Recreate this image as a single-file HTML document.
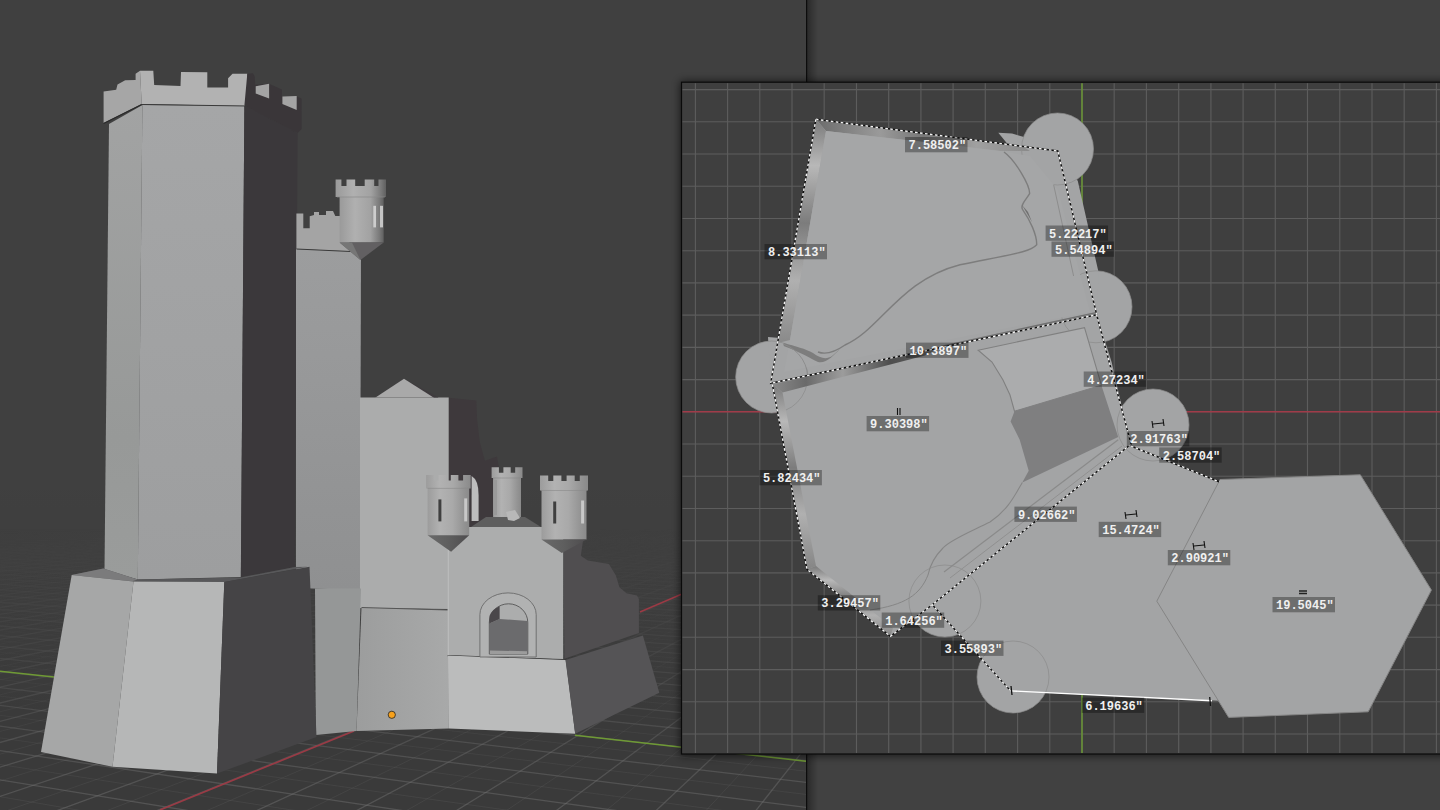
<!DOCTYPE html><html><head><meta charset="utf-8"><style>html,body{margin:0;padding:0;background:#3d3d3d;overflow:hidden}svg{display:block;font-family:"Liberation Mono"}</style></head><body><svg width="1440" height="810" viewBox="0 0 1440 810"><rect x="0" y="0" width="806" height="810" fill="#404040"/>
<defs><linearGradient id="fade" x1="0" y1="0" x2="0" y2="1"><stop offset="0" stop-color="#fff" stop-opacity="0"/><stop offset="0.65" stop-color="#fff" stop-opacity="0"/><stop offset="0.8" stop-color="#fff" stop-opacity="0.3"/><stop offset="0.93" stop-color="#fff" stop-opacity="0.85"/><stop offset="1" stop-color="#fff" stop-opacity="1"/><stop offset="1" stop-color="#fff" stop-opacity="1"/></linearGradient><mask id="fm"><rect x="0" y="0" width="806" height="810" fill="url(#fade)"/></mask><linearGradient id="t2g" x1="0" y1="0" x2="0" y2="1"><stop offset="0" stop-color="#9c9d9e"/><stop offset="1" stop-color="#8f9091"/></linearGradient><linearGradient id="b3g" x1="0" y1="0" x2="1" y2="0"><stop offset="0" stop-color="#9c9d9d"/><stop offset="1" stop-color="#a8a9a9"/></linearGradient><linearGradient id="t1l" x1="0" y1="0" x2="0" y2="1"><stop offset="0" stop-color="#a2a3a3"/><stop offset="0.7" stop-color="#979998"/><stop offset="1" stop-color="#9a9c9b"/></linearGradient><linearGradient id="t1f" x1="0" y1="0" x2="0" y2="1"><stop offset="0" stop-color="#a5a6a7"/><stop offset="1" stop-color="#9d9e9f"/></linearGradient><clipPath id="lv"><rect x="0" y="0" width="806" height="810"/></clipPath></defs>
<linearGradient id="flr" x1="0" y1="0" x2="0" y2="1"><stop offset="0" stop-color="#000" stop-opacity="0"/><stop offset="0.58" stop-color="#000" stop-opacity="0"/><stop offset="0.9" stop-color="#000" stop-opacity="0.1"/></linearGradient>
<rect x="0" y="0" width="806" height="810" fill="url(#flr)"/>
<g clip-path="url(#lv)" mask="url(#fm)">
<line x1="63.9" y1="899.3" x2="-17.4" y2="881.8" stroke="#7a7a7a" stroke-width="1" stroke-opacity="0.16"/>
<line x1="190.9" y1="898.0" x2="-48.7" y2="849.4" stroke="#7a7a7a" stroke-width="1.3" stroke-opacity="0.42"/>
<line x1="317.0" y1="896.7" x2="-42.4" y2="827.9" stroke="#7a7a7a" stroke-width="1" stroke-opacity="0.16"/>
<line x1="442.5" y1="895.4" x2="-36.8" y2="808.6" stroke="#7a7a7a" stroke-width="1.3" stroke-opacity="0.42"/>
<line x1="567.2" y1="894.1" x2="-31.7" y2="791.2" stroke="#7a7a7a" stroke-width="1" stroke-opacity="0.16"/>
<line x1="691.1" y1="892.8" x2="-27.0" y2="775.4" stroke="#7a7a7a" stroke-width="1.3" stroke-opacity="0.42"/>
<line x1="814.4" y1="891.5" x2="-22.8" y2="760.9" stroke="#7a7a7a" stroke-width="1" stroke-opacity="0.16"/>
<line x1="879.2" y1="881.6" x2="-45.5" y2="743.8" stroke="#7a7a7a" stroke-width="1.3" stroke-opacity="0.42"/>
<line x1="885.7" y1="864.2" x2="-41.0" y2="732.0" stroke="#7a7a7a" stroke-width="1" stroke-opacity="0.16"/>
<line x1="891.6" y1="848.2" x2="-36.8" y2="721.1" stroke="#7a7a7a" stroke-width="1.3" stroke-opacity="0.42"/>
<line x1="897.2" y1="833.4" x2="-32.8" y2="711.0" stroke="#7a7a7a" stroke-width="1" stroke-opacity="0.16"/>
<line x1="854.2" y1="813.5" x2="-29.2" y2="701.7" stroke="#7a7a7a" stroke-width="1.3" stroke-opacity="0.42"/>
<line x1="860.6" y1="801.1" x2="-47.5" y2="690.3" stroke="#7a7a7a" stroke-width="1" stroke-opacity="0.16"/>
<line x1="866.5" y1="789.5" x2="-43.7" y2="682.4" stroke="#7a7a7a" stroke-width="1.3" stroke-opacity="0.42"/>
<line x1="872.0" y1="778.7" x2="-40.1" y2="674.9" stroke="#7a7a7a" stroke-width="1" stroke-opacity="0.16"/>
<line x1="877.2" y1="768.5" x2="-36.7" y2="667.9" stroke="#7a7a7a" stroke-width="1.3" stroke-opacity="0.42"/>
<line x1="882.1" y1="758.9" x2="-33.6" y2="661.4" stroke="#7a7a7a" stroke-width="1" stroke-opacity="0.16"/>
<line x1="886.7" y1="749.9" x2="-48.9" y2="653.3" stroke="#7a7a7a" stroke-width="1.3" stroke-opacity="0.42"/>
<line x1="891.1" y1="741.4" x2="-45.6" y2="647.6" stroke="#7a7a7a" stroke-width="1" stroke-opacity="0.16"/>
<line x1="895.2" y1="733.4" x2="-42.5" y2="642.2" stroke="#7a7a7a" stroke-width="1.3" stroke-opacity="0.42"/>
<line x1="899.0" y1="725.8" x2="-39.5" y2="637.0" stroke="#7a7a7a" stroke-width="1" stroke-opacity="0.16"/>
<line x1="867.6" y1="715.4" x2="-36.7" y2="632.2" stroke="#7a7a7a" stroke-width="1.3" stroke-opacity="0.42"/>
<line x1="872.0" y1="708.7" x2="-49.9" y2="626.2" stroke="#7a7a7a" stroke-width="1" stroke-opacity="0.16"/>
<line x1="876.1" y1="702.4" x2="-47.0" y2="621.9" stroke="#7a7a7a" stroke-width="1.3" stroke-opacity="0.42"/>
<line x1="880.0" y1="696.3" x2="-44.2" y2="617.7" stroke="#7a7a7a" stroke-width="1" stroke-opacity="0.16"/>
<line x1="883.8" y1="690.6" x2="-41.6" y2="613.8" stroke="#7a7a7a" stroke-width="1.3" stroke-opacity="0.42"/>
<line x1="887.3" y1="685.1" x2="-39.1" y2="610.1" stroke="#7a7a7a" stroke-width="1" stroke-opacity="0.16"/>
<line x1="890.7" y1="679.8" x2="-36.7" y2="606.5" stroke="#7a7a7a" stroke-width="1.3" stroke-opacity="0.42"/>
<line x1="894.0" y1="674.8" x2="-48.1" y2="602.1" stroke="#7a7a7a" stroke-width="1" stroke-opacity="0.16"/>
<line x1="897.1" y1="670.0" x2="-45.6" y2="598.8" stroke="#7a7a7a" stroke-width="1.3" stroke-opacity="0.42"/>
<line x1="871.9" y1="663.3" x2="-43.3" y2="595.7" stroke="#7a7a7a" stroke-width="1" stroke-opacity="0.16"/>
<line x1="875.3" y1="659.0" x2="-41.0" y2="592.8" stroke="#7a7a7a" stroke-width="1.3" stroke-opacity="0.42"/>
<line x1="878.6" y1="654.8" x2="-38.8" y2="589.9" stroke="#7a7a7a" stroke-width="1" stroke-opacity="0.16"/>
<line x1="881.8" y1="650.8" x2="-48.9" y2="586.4" stroke="#7a7a7a" stroke-width="1.3" stroke-opacity="0.42"/>
<line x1="884.8" y1="647.0" x2="-46.7" y2="583.8" stroke="#7a7a7a" stroke-width="1" stroke-opacity="0.16"/>
<line x1="887.7" y1="643.3" x2="-44.6" y2="581.3" stroke="#7a7a7a" stroke-width="1.3" stroke-opacity="0.42"/>
<line x1="890.5" y1="639.7" x2="-42.5" y2="578.8" stroke="#7a7a7a" stroke-width="1" stroke-opacity="0.16"/>
<line x1="893.2" y1="636.3" x2="-40.5" y2="576.5" stroke="#7a7a7a" stroke-width="1.3" stroke-opacity="0.42"/>
<line x1="895.8" y1="633.0" x2="-49.6" y2="573.6" stroke="#7a7a7a" stroke-width="1" stroke-opacity="0.16"/>
<line x1="898.4" y1="629.8" x2="-47.6" y2="571.4" stroke="#7a7a7a" stroke-width="1.3" stroke-opacity="0.42"/>
<line x1="877.6" y1="625.3" x2="-45.6" y2="569.4" stroke="#7a7a7a" stroke-width="1" stroke-opacity="0.16"/>
<line x1="880.3" y1="622.4" x2="-43.7" y2="567.4" stroke="#7a7a7a" stroke-width="1.3" stroke-opacity="0.42"/>
<line x1="883.0" y1="619.5" x2="-41.9" y2="565.5" stroke="#7a7a7a" stroke-width="1" stroke-opacity="0.16"/>
<line x1="885.5" y1="616.8" x2="-40.1" y2="563.6" stroke="#7a7a7a" stroke-width="1.3" stroke-opacity="0.42"/>
<line x1="888.0" y1="614.1" x2="-48.3" y2="561.2" stroke="#7a7a7a" stroke-width="1" stroke-opacity="0.16"/>
<line x1="890.4" y1="611.5" x2="-46.5" y2="559.5" stroke="#7a7a7a" stroke-width="1.3" stroke-opacity="0.42"/>
<line x1="892.7" y1="609.0" x2="-44.8" y2="557.8" stroke="#7a7a7a" stroke-width="1" stroke-opacity="0.16"/>
<line x1="894.9" y1="606.6" x2="-43.1" y2="556.2" stroke="#7a7a7a" stroke-width="1.3" stroke-opacity="0.42"/>
<line x1="897.1" y1="604.3" x2="-41.4" y2="554.6" stroke="#7a7a7a" stroke-width="1" stroke-opacity="0.16"/>
<line x1="899.2" y1="602.0" x2="-49.0" y2="552.6" stroke="#7a7a7a" stroke-width="1.3" stroke-opacity="0.42"/>
<line x1="881.6" y1="598.8" x2="-47.3" y2="551.1" stroke="#7a7a7a" stroke-width="1" stroke-opacity="0.16"/>
<line x1="883.9" y1="596.7" x2="-45.6" y2="549.7" stroke="#7a7a7a" stroke-width="1.3" stroke-opacity="0.42"/>
<line x1="886.0" y1="594.6" x2="-44.0" y2="548.3" stroke="#7a7a7a" stroke-width="1" stroke-opacity="0.16"/>
<line x1="888.2" y1="592.6" x2="-42.5" y2="546.9" stroke="#7a7a7a" stroke-width="1.3" stroke-opacity="0.42"/>
<line x1="890.3" y1="590.6" x2="-49.5" y2="545.2" stroke="#7a7a7a" stroke-width="1" stroke-opacity="0.16"/>
<line x1="892.3" y1="588.7" x2="-47.9" y2="543.9" stroke="#7a7a7a" stroke-width="1.3" stroke-opacity="0.42"/>
<line x1="894.2" y1="586.9" x2="-46.4" y2="542.7" stroke="#7a7a7a" stroke-width="1" stroke-opacity="0.16"/>
<line x1="896.2" y1="585.1" x2="-44.9" y2="541.5" stroke="#7a7a7a" stroke-width="1.3" stroke-opacity="0.42"/>
<line x1="898.0" y1="583.4" x2="-43.4" y2="540.3" stroke="#7a7a7a" stroke-width="1" stroke-opacity="0.16"/>
<line x1="899.8" y1="581.6" x2="-50.0" y2="538.8" stroke="#7a7a7a" stroke-width="1.3" stroke-opacity="0.42"/>
<line x1="884.5" y1="579.2" x2="-48.5" y2="537.7" stroke="#7a7a7a" stroke-width="1" stroke-opacity="0.16"/>
<line x1="886.5" y1="577.6" x2="-47.1" y2="536.6" stroke="#7a7a7a" stroke-width="1.3" stroke-opacity="0.42"/>
<line x1="888.3" y1="576.1" x2="-45.7" y2="535.5" stroke="#7a7a7a" stroke-width="1" stroke-opacity="0.16"/>
<line x1="890.2" y1="574.5" x2="-44.3" y2="534.5" stroke="#7a7a7a" stroke-width="1.3" stroke-opacity="0.42"/>
<line x1="892.0" y1="573.0" x2="-42.9" y2="533.5" stroke="#7a7a7a" stroke-width="1" stroke-opacity="0.16"/>
<line x1="893.7" y1="571.6" x2="-49.0" y2="532.2" stroke="#7a7a7a" stroke-width="1.3" stroke-opacity="0.42"/>
<line x1="895.4" y1="570.2" x2="-47.6" y2="531.3" stroke="#7a7a7a" stroke-width="1" stroke-opacity="0.16"/>
<line x1="897.1" y1="568.8" x2="-46.3" y2="530.3" stroke="#7a7a7a" stroke-width="1.3" stroke-opacity="0.42"/>
<line x1="898.7" y1="567.4" x2="-45.0" y2="529.4" stroke="#7a7a7a" stroke-width="1" stroke-opacity="0.16"/>
<line x1="885.1" y1="565.5" x2="-43.7" y2="528.5" stroke="#7a7a7a" stroke-width="1.3" stroke-opacity="0.42"/>
<line x1="886.8" y1="564.2" x2="-49.4" y2="527.4" stroke="#7a7a7a" stroke-width="1" stroke-opacity="0.16"/>
<line x1="888.5" y1="563.0" x2="-48.1" y2="526.5" stroke="#7a7a7a" stroke-width="1.3" stroke-opacity="0.42"/>
<line x1="890.1" y1="561.7" x2="-46.9" y2="525.7" stroke="#7a7a7a" stroke-width="1" stroke-opacity="0.16"/>
<line x1="891.7" y1="560.5" x2="-45.7" y2="524.9" stroke="#7a7a7a" stroke-width="1.3" stroke-opacity="0.42"/>
<line x1="893.3" y1="559.4" x2="-44.5" y2="524.1" stroke="#7a7a7a" stroke-width="1" stroke-opacity="0.16"/>
<line x1="894.8" y1="558.2" x2="-49.8" y2="523.1" stroke="#7a7a7a" stroke-width="1.3" stroke-opacity="0.42"/>
<line x1="896.3" y1="557.1" x2="-48.6" y2="522.4" stroke="#7a7a7a" stroke-width="1" stroke-opacity="0.16"/>
<line x1="897.8" y1="556.0" x2="-47.4" y2="521.6" stroke="#7a7a7a" stroke-width="1.3" stroke-opacity="0.42"/>
<line x1="899.3" y1="554.9" x2="-46.2" y2="520.9" stroke="#7a7a7a" stroke-width="1" stroke-opacity="0.16"/>
<line x1="887.0" y1="553.4" x2="-45.1" y2="520.2" stroke="#7a7a7a" stroke-width="1.3" stroke-opacity="0.42"/>
<line x1="888.6" y1="552.3" x2="-44.0" y2="519.5" stroke="#7a7a7a" stroke-width="1" stroke-opacity="0.16"/>
<line x1="890.0" y1="551.3" x2="-49.0" y2="518.6" stroke="#7a7a7a" stroke-width="1.3" stroke-opacity="0.42"/>
<line x1="891.5" y1="550.3" x2="-47.9" y2="517.9" stroke="#7a7a7a" stroke-width="1" stroke-opacity="0.16"/>
<line x1="892.9" y1="549.4" x2="-46.8" y2="517.3" stroke="#7a7a7a" stroke-width="1.3" stroke-opacity="0.42"/>
<line x1="894.3" y1="548.4" x2="-45.7" y2="516.6" stroke="#7a7a7a" stroke-width="1" stroke-opacity="0.16"/>
<line x1="895.7" y1="547.5" x2="-44.6" y2="516.0" stroke="#7a7a7a" stroke-width="1.3" stroke-opacity="0.42"/>
<line x1="897.1" y1="546.6" x2="-49.4" y2="515.2" stroke="#7a7a7a" stroke-width="1" stroke-opacity="0.16"/>
<line x1="898.4" y1="545.7" x2="-48.3" y2="514.6" stroke="#7a7a7a" stroke-width="1.3" stroke-opacity="0.42"/>
<line x1="899.7" y1="544.8" x2="-47.2" y2="514.0" stroke="#7a7a7a" stroke-width="1" stroke-opacity="0.16"/>
<line x1="888.6" y1="543.5" x2="-46.2" y2="513.4" stroke="#7a7a7a" stroke-width="1.3" stroke-opacity="0.42"/>
<line x1="890.0" y1="542.7" x2="-45.2" y2="512.9" stroke="#7a7a7a" stroke-width="1" stroke-opacity="0.16"/>
<line x1="891.3" y1="541.9" x2="-49.7" y2="512.1" stroke="#7a7a7a" stroke-width="1.3" stroke-opacity="0.42"/>
<line x1="892.7" y1="541.0" x2="-48.7" y2="511.6" stroke="#7a7a7a" stroke-width="1" stroke-opacity="0.16"/>
<line x1="893.9" y1="540.2" x2="-47.6" y2="511.1" stroke="#7a7a7a" stroke-width="1.3" stroke-opacity="0.42"/>
<line x1="895.2" y1="539.5" x2="-46.6" y2="510.5" stroke="#7a7a7a" stroke-width="1" stroke-opacity="0.16"/>
<line x1="879.2" y1="881.6" x2="897.2" y2="833.4" stroke="#7a7a7a" stroke-width="1" stroke-opacity="0.16"/>
<line x1="814.4" y1="891.5" x2="899.0" y2="725.8" stroke="#7a7a7a" stroke-width="1.3" stroke-opacity="0.42"/>
<line x1="758.9" y1="882.8" x2="897.1" y2="670.0" stroke="#7a7a7a" stroke-width="1" stroke-opacity="0.16"/>
<line x1="691.1" y1="892.8" x2="898.4" y2="629.8" stroke="#7a7a7a" stroke-width="1.3" stroke-opacity="0.42"/>
<line x1="637.9" y1="884.1" x2="899.2" y2="602.0" stroke="#7a7a7a" stroke-width="1" stroke-opacity="0.16"/>
<line x1="567.2" y1="894.1" x2="899.8" y2="581.6" stroke="#7a7a7a" stroke-width="1.3" stroke-opacity="0.42"/>
<line x1="516.2" y1="885.3" x2="898.7" y2="567.4" stroke="#7a7a7a" stroke-width="1" stroke-opacity="0.16"/>
<line x1="442.5" y1="895.4" x2="899.3" y2="554.9" stroke="#7a7a7a" stroke-width="1.3" stroke-opacity="0.42"/>
<line x1="393.9" y1="886.6" x2="899.7" y2="544.8" stroke="#7a7a7a" stroke-width="1" stroke-opacity="0.16"/>
<line x1="317.0" y1="896.7" x2="898.9" y2="537.2" stroke="#7a7a7a" stroke-width="1.3" stroke-opacity="0.42"/>
<line x1="270.8" y1="887.8" x2="899.3" y2="530.1" stroke="#7a7a7a" stroke-width="1" stroke-opacity="0.16"/>
<line x1="190.9" y1="898.0" x2="899.6" y2="524.1" stroke="#7a7a7a" stroke-width="1.3" stroke-opacity="0.42"/>
<line x1="147.0" y1="889.1" x2="899.9" y2="518.9" stroke="#7a7a7a" stroke-width="1" stroke-opacity="0.16"/>
<line x1="63.9" y1="899.3" x2="899.3" y2="514.8" stroke="#7a7a7a" stroke-width="1.3" stroke-opacity="0.42"/>
<line x1="22.4" y1="890.4" x2="899.6" y2="510.8" stroke="#7a7a7a" stroke-width="1" stroke-opacity="0.16"/>
<line x1="-17.4" y1="881.8" x2="899.8" y2="507.2" stroke="#7a7a7a" stroke-width="1.3" stroke-opacity="0.42"/>
<line x1="-12.5" y1="856.8" x2="899.3" y2="504.4" stroke="#7a7a7a" stroke-width="1" stroke-opacity="0.16"/>
<line x1="-48.7" y1="849.4" x2="899.6" y2="501.5" stroke="#7a7a7a" stroke-width="1.3" stroke-opacity="0.42"/>
<line x1="-42.4" y1="827.9" x2="899.8" y2="499.0" stroke="#7a7a7a" stroke-width="1" stroke-opacity="0.16"/>
<line x1="-36.8" y1="808.6" x2="900.0" y2="496.6" stroke="#7a7a7a" stroke-width="1.3" stroke-opacity="0.42"/>
<line x1="-31.7" y1="791.2" x2="899.5" y2="494.7" stroke="#7a7a7a" stroke-width="1" stroke-opacity="0.16"/>
<line x1="-27.0" y1="775.4" x2="899.7" y2="492.8" stroke="#7a7a7a" stroke-width="1.3" stroke-opacity="0.42"/>
<line x1="-22.8" y1="760.9" x2="899.9" y2="491.0" stroke="#7a7a7a" stroke-width="1" stroke-opacity="0.16"/>
<line x1="-19.0" y1="747.8" x2="899.5" y2="489.5" stroke="#7a7a7a" stroke-width="1.3" stroke-opacity="0.42"/>
<line x1="-45.5" y1="743.8" x2="899.7" y2="488.0" stroke="#7a7a7a" stroke-width="1" stroke-opacity="0.16"/>
<line x1="-41.0" y1="732.0" x2="899.9" y2="486.6" stroke="#7a7a7a" stroke-width="1.3" stroke-opacity="0.42"/>
<line x1="-36.8" y1="721.1" x2="900.0" y2="485.2" stroke="#7a7a7a" stroke-width="1" stroke-opacity="0.16"/>
<line x1="-32.8" y1="711.0" x2="899.7" y2="484.1" stroke="#7a7a7a" stroke-width="1.3" stroke-opacity="0.42"/>
<line x1="-29.2" y1="701.7" x2="899.8" y2="483.0" stroke="#7a7a7a" stroke-width="1" stroke-opacity="0.16"/>
<line x1="-25.9" y1="693.0" x2="899.9" y2="481.9" stroke="#7a7a7a" stroke-width="1.3" stroke-opacity="0.42"/>
<line x1="-47.5" y1="690.3" x2="899.6" y2="481.0" stroke="#7a7a7a" stroke-width="1" stroke-opacity="0.16"/>
<line x1="-43.7" y1="682.4" x2="899.8" y2="480.1" stroke="#7a7a7a" stroke-width="1.3" stroke-opacity="0.42"/>
<line x1="-40.1" y1="674.9" x2="899.9" y2="479.2" stroke="#7a7a7a" stroke-width="1" stroke-opacity="0.16"/>
<line x1="-36.7" y1="667.9" x2="899.6" y2="478.4" stroke="#7a7a7a" stroke-width="1.3" stroke-opacity="0.42"/>
<line x1="-33.6" y1="661.4" x2="899.7" y2="477.6" stroke="#7a7a7a" stroke-width="1" stroke-opacity="0.16"/>
<line x1="-30.6" y1="655.2" x2="899.9" y2="476.9" stroke="#7a7a7a" stroke-width="1.3" stroke-opacity="0.42"/>
<line x1="-48.9" y1="653.3" x2="900.0" y2="476.1" stroke="#7a7a7a" stroke-width="1" stroke-opacity="0.16"/>
<line x1="-45.6" y1="647.6" x2="899.7" y2="475.5" stroke="#7a7a7a" stroke-width="1.3" stroke-opacity="0.42"/>
<line x1="-42.5" y1="642.2" x2="899.8" y2="474.9" stroke="#7a7a7a" stroke-width="1" stroke-opacity="0.16"/>
<line x1="-39.5" y1="637.0" x2="899.9" y2="474.3" stroke="#7a7a7a" stroke-width="1.3" stroke-opacity="0.42"/>
<line x1="-36.7" y1="632.2" x2="899.7" y2="473.7" stroke="#7a7a7a" stroke-width="1" stroke-opacity="0.16"/>
<line x1="-34.1" y1="627.6" x2="899.8" y2="473.2" stroke="#7a7a7a" stroke-width="1.3" stroke-opacity="0.42"/>
<line x1="-49.9" y1="626.2" x2="898.6" y2="472.8" stroke="#7a7a7a" stroke-width="1" stroke-opacity="0.16"/>
<line x1="-47.0" y1="621.9" x2="895.6" y2="472.8" stroke="#7a7a7a" stroke-width="1.3" stroke-opacity="0.42"/>
<line x1="-44.2" y1="617.7" x2="892.6" y2="472.8" stroke="#7a7a7a" stroke-width="1" stroke-opacity="0.16"/>
<line x1="-41.6" y1="613.8" x2="889.6" y2="472.8" stroke="#7a7a7a" stroke-width="1.3" stroke-opacity="0.42"/>
<line x1="-39.1" y1="610.1" x2="886.6" y2="472.8" stroke="#7a7a7a" stroke-width="1" stroke-opacity="0.16"/>
<line x1="-36.7" y1="606.5" x2="883.6" y2="472.7" stroke="#7a7a7a" stroke-width="1.3" stroke-opacity="0.42"/>
<line x1="-34.4" y1="603.1" x2="880.7" y2="472.7" stroke="#7a7a7a" stroke-width="1" stroke-opacity="0.16"/>
<line x1="-48.1" y1="602.1" x2="877.7" y2="472.7" stroke="#7a7a7a" stroke-width="1.3" stroke-opacity="0.42"/>
<line x1="-45.6" y1="598.8" x2="874.7" y2="472.7" stroke="#7a7a7a" stroke-width="1" stroke-opacity="0.16"/>
<line x1="-43.3" y1="595.7" x2="871.7" y2="472.6" stroke="#7a7a7a" stroke-width="1.3" stroke-opacity="0.42"/>
<line x1="-41.0" y1="592.8" x2="868.8" y2="472.6" stroke="#7a7a7a" stroke-width="1" stroke-opacity="0.16"/>
<line x1="-38.8" y1="589.9" x2="865.8" y2="472.6" stroke="#7a7a7a" stroke-width="1.3" stroke-opacity="0.42"/>
<line x1="-36.7" y1="587.2" x2="862.9" y2="472.6" stroke="#7a7a7a" stroke-width="1" stroke-opacity="0.16"/>
<line x1="-48.9" y1="586.4" x2="859.9" y2="472.5" stroke="#7a7a7a" stroke-width="1.3" stroke-opacity="0.42"/>
<line x1="-46.7" y1="583.8" x2="857.0" y2="472.5" stroke="#7a7a7a" stroke-width="1" stroke-opacity="0.16"/>
<line x1="-44.6" y1="581.3" x2="854.1" y2="472.5" stroke="#7a7a7a" stroke-width="1.3" stroke-opacity="0.42"/>
<line x1="-42.5" y1="578.8" x2="851.2" y2="472.5" stroke="#7a7a7a" stroke-width="1" stroke-opacity="0.16"/>
<line x1="-40.5" y1="576.5" x2="848.2" y2="472.5" stroke="#7a7a7a" stroke-width="1.3" stroke-opacity="0.42"/>
<line x1="-38.6" y1="574.3" x2="845.3" y2="472.4" stroke="#7a7a7a" stroke-width="1" stroke-opacity="0.16"/>
<line x1="-49.6" y1="573.6" x2="842.4" y2="472.4" stroke="#7a7a7a" stroke-width="1.3" stroke-opacity="0.42"/>
<line x1="-47.6" y1="571.4" x2="839.5" y2="472.4" stroke="#7a7a7a" stroke-width="1" stroke-opacity="0.16"/>
<line x1="-45.6" y1="569.4" x2="836.6" y2="472.4" stroke="#7a7a7a" stroke-width="1.3" stroke-opacity="0.42"/>
<line x1="-43.7" y1="567.4" x2="833.8" y2="472.3" stroke="#7a7a7a" stroke-width="1" stroke-opacity="0.16"/>
<line x1="-41.9" y1="565.5" x2="830.9" y2="472.3" stroke="#7a7a7a" stroke-width="1.3" stroke-opacity="0.42"/>
<line x1="-40.1" y1="563.6" x2="828.0" y2="472.3" stroke="#7a7a7a" stroke-width="1" stroke-opacity="0.16"/>
<line x1="-38.4" y1="561.8" x2="825.1" y2="472.3" stroke="#7a7a7a" stroke-width="1.3" stroke-opacity="0.42"/>
<line x1="-48.3" y1="561.2" x2="822.3" y2="472.2" stroke="#7a7a7a" stroke-width="1" stroke-opacity="0.16"/>
<line x1="-46.5" y1="559.5" x2="819.4" y2="472.2" stroke="#7a7a7a" stroke-width="1.3" stroke-opacity="0.42"/>
<line x1="-44.8" y1="557.8" x2="816.6" y2="472.2" stroke="#7a7a7a" stroke-width="1" stroke-opacity="0.16"/>
<line x1="-43.1" y1="556.2" x2="813.7" y2="472.2" stroke="#7a7a7a" stroke-width="1.3" stroke-opacity="0.42"/>
<line x1="-41.4" y1="554.6" x2="810.9" y2="472.2" stroke="#7a7a7a" stroke-width="1" stroke-opacity="0.16"/>
<line x1="-39.8" y1="553.1" x2="808.0" y2="472.1" stroke="#7a7a7a" stroke-width="1.3" stroke-opacity="0.42"/>
<line x1="-49.0" y1="552.6" x2="805.2" y2="472.1" stroke="#7a7a7a" stroke-width="1" stroke-opacity="0.16"/>
</g>
<line x1="160.0" y1="810.0" x2="354.0" y2="731.0" stroke="#9b3a45" stroke-width="1.6" />
<line x1="640.0" y1="612.0" x2="806.0" y2="541.0" stroke="#9b3a45" stroke-width="1.6" />
<line x1="0.0" y1="671.3" x2="54.0" y2="677.0" stroke="#6f9a35" stroke-width="1.6" />
<line x1="575.0" y1="735.2" x2="806.0" y2="761.2" stroke="#6f9a35" stroke-width="1.6" />
<polygon points="109.0,124.0 142.4,105.0 137.8,579.4 104.5,570.0" fill="url(#t1l)" />
<polygon points="142.4,105.0 244.4,105.4 240.8,577.0 137.8,579.4" fill="url(#t1f)" />
<polygon points="244.4,105.4 297.7,133.0 294.8,567.0 240.9,577.0" fill="#3b383b" />
<polygon points="103.6,91.5 116.2,89.8 117.5,84.6 125.2,80.3 135.6,80.0 135.6,73.8 140.0,70.8 141.7,104.1 103.6,123.1" fill="#a6a6a6" />
<polygon points="140.0,70.8 153.3,70.8 154.2,85.1 180.5,85.9 181.0,72.1 207.3,72.3 207.3,87.6 228.1,87.6 228.1,78.3 232.5,73.8 247.3,73.8 247.3,105.9 141.7,104.1" fill="#b2b2b2" />
<polygon points="247.3,73.8 252.8,73.3 254.7,76.3 255.2,84.7 269.1,83.7 281.9,89.6 281.9,96.5 296.7,96.5 301.6,98.5 301.6,129.1 297.7,133.1 244.4,105.4" fill="#3a3639" />
<polygon points="255.7,86.2 269.1,83.7 269.1,98.5 255.7,93.6" fill="#a4a4a4" />
<polygon points="282.4,96.5 296.7,96.0 296.7,109.9 282.4,103.9" fill="#a4a4a4" />
<line x1="103.6" y1="123.5" x2="141.7" y2="104.5" stroke="#2a2a2a" stroke-width="1.2" />
<line x1="141.7" y1="104.5" x2="247.0" y2="106.0" stroke="#3a3a3a" stroke-width="1" />
<polygon points="296.0,249.0 361.0,251.6 360.0,590.0 296.0,588.0" fill="url(#t2g)" />
<polygon points="296.4,213.6 303.3,213.6 303.3,228.3 309.7,228.3 309.7,216.2 314.0,215.0 314.0,212.0 319.0,212.0 319.0,215.0 326.0,215.0 326.0,211.0 333.0,211.0 335.3,216.0 340.0,216.0 352.6,251.6 296.4,249.0" fill="#a4a4a4" />
<line x1="296.4" y1="249.0" x2="352.6" y2="251.6" stroke="#3a3a3a" stroke-width="1" />
<defs><linearGradient id="cyl2" x1="0" y1="0" x2="1" y2="0"><stop offset="0" stop-color="#9a9a9a"/><stop offset="0.35" stop-color="#b0b0b0"/><stop offset="0.7" stop-color="#a2a2a2"/><stop offset="0.9" stop-color="#7a7a7a"/><stop offset="1" stop-color="#606060"/></linearGradient></defs>
<polygon points="339.6,196.0 383.7,196.0 383.7,242.6 339.6,242.6" fill="url(#cyl2)" />
<polygon points="335.6,179.5 341.4,179.5 341.4,185.9 346.5,185.9 346.5,179.5 355.2,179.5 355.2,185.9 364.7,185.9 364.7,179.5 374.2,179.5 374.2,185.9 378.5,185.9 378.5,179.5 386.0,179.5 386.0,197.0 335.6,197.0" fill="url(#cyl2)" />
<line x1="337.0" y1="197.0" x2="385.0" y2="197.0" stroke="#8a8a8a" stroke-width="0.7" />
<polygon points="339.6,242.6 383.7,242.6 360.4,260.0" fill="#626062" />
<polygon points="339.6,242.6 352.0,242.6 360.4,260.0" fill="#767676" />
<polygon points="373.3,205.8 376.0,205.8 376.0,227.4 373.3,227.4" fill="#cdcdcd" />
<polygon points="380.0,205.8 383.0,205.8 383.0,227.4 380.0,227.4" fill="#c5c5c5" />
<polygon points="448.6,397.8 476.3,400.4 477.1,419.4 479.7,441.8 484.9,460.8 497.0,456.5 498.7,466.0 498.0,530.0 448.6,530.0" fill="#3e393c" />
<polygon points="360.0,397.5 448.7,397.5 448.7,609.0 360.0,608.0" fill="#abacac" />
<polygon points="375.5,397.5 404.0,378.7 438.6,397.5" fill="#3f3b3e" />
<polygon points="375.5,397.5 404.0,378.7 433.5,397.5" fill="#a9a9a9" />
<line x1="375.5" y1="397.5" x2="433.5" y2="397.5" stroke="#8a8a8a" stroke-width="0.8" />
<polygon points="315.0,588.5 361.0,588.5 356.5,731.0 315.8,735.0" fill="#959797" />
<polygon points="361.5,607.5 448.9,610.0 448.9,728.4 356.5,731.0" fill="url(#b3g)" />
<line x1="361.5" y1="607.5" x2="448.9" y2="610.0" stroke="#555" stroke-width="1.2" />
<polygon points="563.2,527.0 585.5,524.0 580.8,555.7 587.8,560.4 608.9,563.9 615.9,575.6 619.4,587.3 626.5,593.2 637.0,595.5 638.9,599.0 638.9,633.0 564.4,658.8" fill="#504e50" />
<polygon points="447.7,527.0 563.2,527.0 563.2,659.0 447.7,655.6" fill="#acadad" />
<line x1="447.7" y1="655.6" x2="565.7" y2="660.0" stroke="#333" stroke-width="1.2" />
<line x1="448.3" y1="540.0" x2="448.3" y2="655.0" stroke="#bcbcbc" stroke-width="1.1" />
<polygon points="448.0,655.6 565.7,660.0 575.2,733.8 448.9,728.4" fill="#bbbcbc" />
<polygon points="565.5,660.0 642.9,635.4 659.3,692.8 575.2,733.8" fill="#555456" />
<path d="M479.9,657 L479.9,614.6 A28.15,21.7 0 0 1 536.2,614.6 L536.2,657 Z" fill="#b1b2b2" stroke="#6a6a6a" stroke-width="0.9"/>
<path d="M489.3,654.1 L489.3,622.5 A19.25,18.7 0 0 1 527.8,622.5 L527.8,654.1 Z" fill="#acadad" stroke="#555" stroke-width="0.9"/>
<polygon points="489.3,623.5 499.6,619.0 527.8,621.0 527.8,654.1 489.3,654.1" fill="#6b6b6d" />
<path d="M489.3,623.5 L489.5,616 Q492,609 499.6,606.2 L499.6,619 Z" fill="#4a474a" />
<polygon points="490.0,650.5 527.0,651.2 527.0,654.0 490.0,654.0" fill="#9c9c9c" />
<defs><linearGradient id="cyl" x1="0" y1="0" x2="1" y2="0"><stop offset="0" stop-color="#9c9c9c"/><stop offset="0.3" stop-color="#b2b2b2"/><stop offset="0.6" stop-color="#a9a9a9"/><stop offset="0.85" stop-color="#959595"/><stop offset="1" stop-color="#8a8a8a"/></linearGradient><linearGradient id="cone" x1="0" y1="0" x2="1" y2="0"><stop offset="0" stop-color="#6a6a6a"/><stop offset="0.5" stop-color="#5e5e5e"/><stop offset="1" stop-color="#4e4c4e"/></linearGradient></defs>
<path d="M471.6,476 Q478.6,480 478.6,495 L478.6,521 L471.6,521 Z" fill="#bdbdbd" />
<polygon points="491.6,478.0 491.6,467.3 498.9,467.3 498.9,472.8 503.4,472.8 503.4,467.3 510.7,467.3 510.7,472.8 515.2,472.8 515.2,467.3 522.5,467.3 522.5,478.0" fill="url(#cyl)" />
<polygon points="493.1,477.0 521.0,477.0 521.0,517.0 493.1,517.0" fill="url(#cyl)" />
<line x1="493.1" y1="478.0" x2="521.0" y2="478.0" stroke="#8a8a8a" stroke-width="0.6" />
<polygon points="493.1,517.0 521.0,517.0 507.0,525.0" fill="url(#cone)" />
<polygon points="493.5,480.0 497.0,480.0 497.0,515.0 493.5,515.0" fill="#9a9a9a" />
<polygon points="486.0,517.0 525.0,517.0 541.0,527.0 471.0,527.0" fill="#5e5e5e" />
<polygon points="506.0,512.0 515.0,510.0 520.0,518.0 514.0,521.0 508.0,520.0" fill="#b8b8b8" />
<polygon points="426.1,488.4 426.1,475.0 433.7,475.0 433.7,480.5 438.4,480.5 438.4,475.0 446.0,475.0 446.0,480.5 450.8,480.5 450.8,475.0 458.4,475.0 458.4,480.5 463.1,480.5 463.1,475.0 470.7,475.0 470.7,488.4" fill="url(#cyl)" />
<polygon points="427.6,487.4 469.2,487.4 469.2,535.3 427.6,535.3" fill="url(#cyl)" />
<line x1="427.6" y1="488.4" x2="469.2" y2="488.4" stroke="#8a8a8a" stroke-width="0.6" />
<polygon points="427.6,535.3 469.2,535.3 451.1,551.8" fill="url(#cone)" />
<polygon points="438.4,499.4 441.4,499.4 441.4,521.4 438.4,521.4" fill="#3f3f3f" />
<polygon points="464.2,498.4 467.2,498.4 467.2,521.4 464.2,521.4" fill="#c8c8c8" />
<polygon points="540.0,490.5 540.0,475.5 548.2,475.5 548.2,481.0 553.3,481.0 553.3,475.5 561.4,475.5 561.4,481.0 566.6,481.0 566.6,475.5 574.7,475.5 574.7,481.0 579.8,481.0 579.8,475.5 588.0,475.5 588.0,490.5" fill="url(#cyl)" />
<polygon points="541.5,489.5 586.5,489.5 586.5,539.6 541.5,539.6" fill="url(#cyl)" />
<line x1="541.5" y1="490.5" x2="586.5" y2="490.5" stroke="#8a8a8a" stroke-width="0.6" />
<polygon points="541.5,539.6 586.5,539.6 561.8,552.9" fill="url(#cone)" />
<polygon points="553.2,501.5 556.2,501.5 556.2,523.5 553.2,523.5" fill="#3f3f3f" />
<polygon points="581.1,500.5 584.1,500.5 584.1,523.5 581.1,523.5" fill="#c8c8c8" />
<circle cx="391.8" cy="714.8" r="3.6" fill="#f7a11c" stroke="#222" stroke-width="0.8"/>
<polygon points="71.7,574.9 103.3,568.5 137.6,579.4 240.6,577.6 294.8,567.0 307.4,566.7 224.3,582.1 132.2,581.2" fill="#58585a" />
<polygon points="71.7,574.9 103.3,568.5 137.6,579.4 132.2,581.2" fill="#7b7b7c" />
<polygon points="71.7,574.9 133.5,581.4 112.5,766.8 41.0,752.0" fill="#a6a7a7" />
<polygon points="133.5,581.4 224.3,582.1 217.0,773.6 112.5,766.8" fill="#b6b7b7" />
<polygon points="224.3,582.1 309.5,566.7 316.5,737.0 217.0,773.6" fill="#454446" />
<rect x="807" y="0" width="633" height="810" fill="#414141"/>
<defs><linearGradient id="shR" x1="0" y1="0" x2="1" y2="0"><stop offset="0" stop-color="#000" stop-opacity="0.35"/><stop offset="1" stop-color="#000" stop-opacity="0"/></linearGradient><filter id="blur4" x="-5%" y="-5%" width="110%" height="110%"><feGaussianBlur stdDeviation="4"/></filter></defs>
<rect x="807" y="0" width="11" height="810" fill="url(#shR)"/>
<rect x="806" y="0" width="1.2" height="810" fill="#0c0c0c"/>
<rect x="680" y="81" width="775" height="675" fill="#000" fill-opacity="0.6" filter="url(#blur4)"/>
<rect x="681.5" y="82.2" width="760.5" height="671.8" fill="#3f3f3f" stroke="#0a0a0a" stroke-width="1.2"/>
<clipPath id="pc"><rect x="682.5" y="83.2" width="759.5" height="669.8"/></clipPath>
<filter id="gb"><feGaussianBlur stdDeviation="0.35"/></filter>
<g clip-path="url(#pc)"><g filter="url(#gb)">
<line x1="630.9" y1="82.2" x2="630.9" y2="754.0" stroke="#5d5d5d" stroke-width="1.1" />
<line x1="663.1" y1="82.2" x2="663.1" y2="754.0" stroke="#5d5d5d" stroke-width="1.1" />
<line x1="695.4" y1="82.2" x2="695.4" y2="754.0" stroke="#5d5d5d" stroke-width="1.1" />
<line x1="727.6" y1="82.2" x2="727.6" y2="754.0" stroke="#5d5d5d" stroke-width="1.1" />
<line x1="759.8" y1="82.2" x2="759.8" y2="754.0" stroke="#5d5d5d" stroke-width="1.1" />
<line x1="792.0" y1="82.2" x2="792.0" y2="754.0" stroke="#5d5d5d" stroke-width="1.1" />
<line x1="824.2" y1="82.2" x2="824.2" y2="754.0" stroke="#5d5d5d" stroke-width="1.1" />
<line x1="856.5" y1="82.2" x2="856.5" y2="754.0" stroke="#5d5d5d" stroke-width="1.1" />
<line x1="888.7" y1="82.2" x2="888.7" y2="754.0" stroke="#5d5d5d" stroke-width="1.1" />
<line x1="920.9" y1="82.2" x2="920.9" y2="754.0" stroke="#5d5d5d" stroke-width="1.1" />
<line x1="953.1" y1="82.2" x2="953.1" y2="754.0" stroke="#5d5d5d" stroke-width="1.1" />
<line x1="985.3" y1="82.2" x2="985.3" y2="754.0" stroke="#5d5d5d" stroke-width="1.1" />
<line x1="1017.6" y1="82.2" x2="1017.6" y2="754.0" stroke="#5d5d5d" stroke-width="1.1" />
<line x1="1049.8" y1="82.2" x2="1049.8" y2="754.0" stroke="#5d5d5d" stroke-width="1.1" />
<line x1="1082.0" y1="82.2" x2="1082.0" y2="754.0" stroke="#5d5d5d" stroke-width="1.1" />
<line x1="1114.2" y1="82.2" x2="1114.2" y2="754.0" stroke="#5d5d5d" stroke-width="1.1" />
<line x1="1146.4" y1="82.2" x2="1146.4" y2="754.0" stroke="#5d5d5d" stroke-width="1.1" />
<line x1="1178.7" y1="82.2" x2="1178.7" y2="754.0" stroke="#5d5d5d" stroke-width="1.1" />
<line x1="1210.9" y1="82.2" x2="1210.9" y2="754.0" stroke="#5d5d5d" stroke-width="1.1" />
<line x1="1243.1" y1="82.2" x2="1243.1" y2="754.0" stroke="#5d5d5d" stroke-width="1.1" />
<line x1="1275.3" y1="82.2" x2="1275.3" y2="754.0" stroke="#5d5d5d" stroke-width="1.1" />
<line x1="1307.5" y1="82.2" x2="1307.5" y2="754.0" stroke="#5d5d5d" stroke-width="1.1" />
<line x1="1339.8" y1="82.2" x2="1339.8" y2="754.0" stroke="#5d5d5d" stroke-width="1.1" />
<line x1="1372.0" y1="82.2" x2="1372.0" y2="754.0" stroke="#5d5d5d" stroke-width="1.1" />
<line x1="1404.2" y1="82.2" x2="1404.2" y2="754.0" stroke="#5d5d5d" stroke-width="1.1" />
<line x1="1436.4" y1="82.2" x2="1436.4" y2="754.0" stroke="#5d5d5d" stroke-width="1.1" />
<line x1="681.5" y1="57.4" x2="1442.0" y2="57.4" stroke="#5d5d5d" stroke-width="1.1" />
<line x1="681.5" y1="89.6" x2="1442.0" y2="89.6" stroke="#5d5d5d" stroke-width="1.1" />
<line x1="681.5" y1="121.8" x2="1442.0" y2="121.8" stroke="#5d5d5d" stroke-width="1.1" />
<line x1="681.5" y1="154.0" x2="1442.0" y2="154.0" stroke="#5d5d5d" stroke-width="1.1" />
<line x1="681.5" y1="186.3" x2="1442.0" y2="186.3" stroke="#5d5d5d" stroke-width="1.1" />
<line x1="681.5" y1="218.5" x2="1442.0" y2="218.5" stroke="#5d5d5d" stroke-width="1.1" />
<line x1="681.5" y1="250.7" x2="1442.0" y2="250.7" stroke="#5d5d5d" stroke-width="1.1" />
<line x1="681.5" y1="282.9" x2="1442.0" y2="282.9" stroke="#5d5d5d" stroke-width="1.1" />
<line x1="681.5" y1="315.1" x2="1442.0" y2="315.1" stroke="#5d5d5d" stroke-width="1.1" />
<line x1="681.5" y1="347.4" x2="1442.0" y2="347.4" stroke="#5d5d5d" stroke-width="1.1" />
<line x1="681.5" y1="379.6" x2="1442.0" y2="379.6" stroke="#5d5d5d" stroke-width="1.1" />
<line x1="681.5" y1="411.8" x2="1442.0" y2="411.8" stroke="#5d5d5d" stroke-width="1.1" />
<line x1="681.5" y1="444.0" x2="1442.0" y2="444.0" stroke="#5d5d5d" stroke-width="1.1" />
<line x1="681.5" y1="476.2" x2="1442.0" y2="476.2" stroke="#5d5d5d" stroke-width="1.1" />
<line x1="681.5" y1="508.5" x2="1442.0" y2="508.5" stroke="#5d5d5d" stroke-width="1.1" />
<line x1="681.5" y1="540.7" x2="1442.0" y2="540.7" stroke="#5d5d5d" stroke-width="1.1" />
<line x1="681.5" y1="572.9" x2="1442.0" y2="572.9" stroke="#5d5d5d" stroke-width="1.1" />
<line x1="681.5" y1="605.1" x2="1442.0" y2="605.1" stroke="#5d5d5d" stroke-width="1.1" />
<line x1="681.5" y1="637.3" x2="1442.0" y2="637.3" stroke="#5d5d5d" stroke-width="1.1" />
<line x1="681.5" y1="669.6" x2="1442.0" y2="669.6" stroke="#5d5d5d" stroke-width="1.1" />
<line x1="681.5" y1="701.8" x2="1442.0" y2="701.8" stroke="#5d5d5d" stroke-width="1.1" />
<line x1="681.5" y1="734.0" x2="1442.0" y2="734.0" stroke="#5d5d5d" stroke-width="1.1" />
<line x1="681.5" y1="766.2" x2="1442.0" y2="766.2" stroke="#5d5d5d" stroke-width="1.1" />
<line x1="1082.0" y1="82.2" x2="1082.0" y2="754.0" stroke="#6a9a30" stroke-width="1.4" />
<line x1="681.5" y1="411.8" x2="1442.0" y2="411.8" stroke="#a03a48" stroke-width="1.4" />
</g></g>
<defs>
<linearGradient id="stripA" x1="0" y1="0" x2="1" y2="0"><stop offset="0" stop-color="#6c6c6c"/><stop offset="0.3" stop-color="#9a9a9a"/><stop offset="0.5" stop-color="#777"/><stop offset="0.75" stop-color="#a0a0a0"/><stop offset="1" stop-color="#8a8a8a"/></linearGradient>
<linearGradient id="stripB" x1="0" y1="0" x2="0" y2="1"><stop offset="0" stop-color="#7a7a7a"/><stop offset="0.2" stop-color="#b8b8b8"/><stop offset="0.45" stop-color="#7c7c7c"/><stop offset="0.7" stop-color="#b0b0b0"/><stop offset="1" stop-color="#858585"/></linearGradient>
<linearGradient id="stripC" x1="0" y1="0" x2="1" y2="0"><stop offset="0" stop-color="#8a8a8a"/><stop offset="0.2" stop-color="#6a6a6a"/><stop offset="0.42" stop-color="#9c9c9c"/><stop offset="0.7" stop-color="#4e4e4e"/><stop offset="0.88" stop-color="#5a5a5a"/><stop offset="1" stop-color="#8e8e8e"/></linearGradient>
</defs>
<circle cx="1057.5" cy="149" r="36" fill="#a3a4a5"/>
<circle cx="1096" cy="306.8" r="36" fill="#a3a4a5"/>
<circle cx="771.7" cy="377" r="36" fill="#a3a4a5"/>
<circle cx="1153" cy="425" r="36" fill="#a3a4a5"/>
<circle cx="944.9" cy="601" r="36" fill="#a3a4a5"/>
<circle cx="1013" cy="677" r="36" fill="#a3a4a5"/>
<polygon points="815.9,119.3 1057.8,151.0 1077.8,181.0 1098.5,272.0 1096.7,314.8 770.7,383.3 768.0,337.0 780.0,338.0" fill="#a3a4a5" />
<polygon points="998.3,132.7 1012.0,133.5 1024.0,137.0 1030.0,150.0 1010.0,147.0" fill="#a3a4a5" />
<polygon points="772.4,384.3 1096.5,314.3 1111.6,361.9 1122.5,409.4 1131.1,444.0 932.3,604.7 890.4,636.3 807.0,569.3" fill="#a3a4a5" />
<polygon points="1131.0,444.0 1220.0,482.0 1218.0,700.8 1010.6,690.9 931.6,604.0" fill="#a3a4a5" />
<polygon points="1156.8,601.2 1220.0,479.5 1360.3,474.8 1431.4,590.1 1368.2,711.8 1228.7,717.4" fill="#a3a4a5" stroke="#858585" stroke-width="1"/>
<circle cx="1057.5" cy="149" r="36" fill="none" stroke="#8c8c8c" stroke-width="0.9" stroke-opacity="0.8"/>
<circle cx="1096" cy="306.8" r="36" fill="none" stroke="#8c8c8c" stroke-width="0.9" stroke-opacity="0.8"/>
<circle cx="771.7" cy="377" r="36" fill="none" stroke="#8c8c8c" stroke-width="0.9" stroke-opacity="0.8"/>
<circle cx="1153" cy="425" r="36" fill="none" stroke="#8c8c8c" stroke-width="0.9" stroke-opacity="0.8"/>
<circle cx="944.9" cy="601" r="36" fill="none" stroke="#8c8c8c" stroke-width="0.9" stroke-opacity="0.8"/>
<circle cx="1013" cy="677" r="36" fill="none" stroke="#8c8c8c" stroke-width="0.9" stroke-opacity="0.8"/>
<polygon points="815.9,119.3 1000.0,143.0 1022.0,146.0 1030.0,151.0 1000.0,151.0 960.0,146.0 826.0,131.0" fill="url(#stripA)" />
<polygon points="815.9,119.3 826.0,131.0 790.0,340.0 778.0,343.0 776.0,350.0" fill="url(#stripB)" />
<polygon points="826.0,131.0 1000.0,151.0 1030.0,156.0 1058.0,190.0 1090.0,312.0 784.0,372.0 790.0,340.0" fill="#a5a6a7" />
<path d="M1053.7,185 L1073.6,276" stroke="#8d8d8d" stroke-width="1" fill="none"/>
<path d="M1004,152 C1015,160 1030,185 1029.6,193.7 C1026,200 1020,205 1022.5,209.3 C1030,220 1037,235 1036.7,244.8 C1030,252 1016.8,253.3 960,264.7 C900,280 880,330 845,345 C835,352 826,355 818,352" stroke="#7d7d7d" stroke-width="1.4" fill="none"/>
<path d="M1022,205 L1032,222 L1028,212 Z" fill="#6f6f6f"/>
<path d="M783.7,343 C795,346 806,349 813,353 C820,358 826,360 832,356 L840,349 C834,355 826,364 818,362 C810,358 800,352 783.7,346 Z" fill="#7d7d7d"/>
<path d="M783,344 A36,36 0 0 1 807.5,383" stroke="#8a8a8a" stroke-width="0.9" fill="none"/>
<polygon points="772.4,384.3 940.0,348.2 925.0,355.5 782.5,392.5" fill="url(#stripC)" />
<path d="M940,346.6 L1096,312.6" stroke="#6e6e6e" stroke-width="1.3" fill="none"/>
<polygon points="772.4,384.3 782.5,392.5 816.0,566.0 807.0,569.3" fill="url(#stripB)" />
<polygon points="807.0,569.3 816.0,566.0 893.0,628.0 890.4,636.3" fill="url(#stripB)" />
<polygon points="978.2,350.2 1084.5,327.6 1101.4,385.2 1014.5,411.2 1010.0,395.0 1003.0,380.0 992.0,362.0" fill="#abacad" stroke="#808080" stroke-width="1.1"/>
<polygon points="1014.5,411.2 1101.4,385.2 1118.2,437.1 1022.3,482.5 1028.7,470.8 1019.7,439.7 1010.6,421.5" fill="#7f7f80" />
<path d="M1118.2,439.7 L944,572" stroke="#8a8a8a" stroke-width="1.2" fill="none"/>
<path d="M1122,446 L950,578" stroke="#909090" stroke-width="1" fill="none"/>
<path d="M1022.3,482.5 C1015,495 1008,510 990,522 C970,532 950,540 943,548 C935,556 930,565 928,575" stroke="#868686" stroke-width="1.1" fill="none"/>
<path d="M928,575 C920,595 905,605 870,610" stroke="#868686" stroke-width="1" fill="none"/>
<path d="M815.9,119.3 L1057.8,151.0 L1096.7,314.8" fill="none" stroke="#111" stroke-width="1.4"/>
<path d="M815.9,119.3 L1057.8,151.0 L1096.7,314.8" fill="none" stroke="#f4f4f4" stroke-width="1.4" stroke-dasharray="2.6 2.4"/>
<path d="M815.9,119.3 L770.7,383.3 L1096.7,314.8" fill="none" stroke="#111" stroke-width="1.4"/>
<path d="M815.9,119.3 L770.7,383.3 L1096.7,314.8" fill="none" stroke="#f4f4f4" stroke-width="1.4" stroke-dasharray="2.6 2.4"/>
<path d="M772.4,384.3 L807.0,569.3 L890.4,636.3 L932.3,604.7 L1131.1,444.0 L1096.5,314.3" fill="none" stroke="#111" stroke-width="1.4"/>
<path d="M772.4,384.3 L807.0,569.3 L890.4,636.3 L932.3,604.7 L1131.1,444.0 L1096.5,314.3" fill="none" stroke="#f4f4f4" stroke-width="1.4" stroke-dasharray="2.6 2.4"/>
<path d="M1131.0,446.0 L1219.7,482.0" fill="none" stroke="#111" stroke-width="1.4"/>
<path d="M1131.0,446.0 L1219.7,482.0" fill="none" stroke="#f4f4f4" stroke-width="1.4" stroke-dasharray="2.6 2.4"/>
<path d="M931.6,604.0 L1010.6,690.9" fill="none" stroke="#111" stroke-width="1.4"/>
<path d="M931.6,604.0 L1010.6,690.9" fill="none" stroke="#f4f4f4" stroke-width="1.4" stroke-dasharray="2.6 2.4"/>
<path d="M1010.6,690.9 L1212,700.8" fill="none" stroke="#fff" stroke-width="1.4"/>
<rect x="905" y="137" width="62.5" height="15.3" fill="#000" fill-opacity="0.33"/>
<text x="908.5" y="149.2" fill="#f0f0f0" font-family="Liberation Mono" font-size="12" font-weight="bold">7.58502&quot;</text>
<rect x="764.5" y="244" width="62.5" height="15.3" fill="#000" fill-opacity="0.33"/>
<text x="768.0" y="256.2" fill="#f0f0f0" font-family="Liberation Mono" font-size="12" font-weight="bold">8.33113&quot;</text>
<rect x="1045.6" y="225.5" width="62.5" height="15.3" fill="#000" fill-opacity="0.33"/>
<text x="1049.1" y="237.7" fill="#f0f0f0" font-family="Liberation Mono" font-size="12" font-weight="bold">5.22217&quot;</text>
<rect x="1051.5" y="241.5" width="62.5" height="15.3" fill="#000" fill-opacity="0.33"/>
<text x="1055.0" y="253.7" fill="#f0f0f0" font-family="Liberation Mono" font-size="12" font-weight="bold">5.54894&quot;</text>
<rect x="906" y="342.6" width="62.5" height="15.3" fill="#000" fill-opacity="0.33"/>
<text x="909.5" y="354.8" fill="#f0f0f0" font-family="Liberation Mono" font-size="12" font-weight="bold">10.3897&quot;</text>
<rect x="1083.7" y="371.5" width="62.5" height="15.3" fill="#000" fill-opacity="0.33"/>
<text x="1087.2" y="383.7" fill="#f0f0f0" font-family="Liberation Mono" font-size="12" font-weight="bold">4.27234&quot;</text>
<rect x="866.6" y="416" width="62.5" height="15.3" fill="#000" fill-opacity="0.33"/>
<text x="870.1" y="428.2" fill="#f0f0f0" font-family="Liberation Mono" font-size="12" font-weight="bold">9.30398&quot;</text>
<rect x="759.4" y="470" width="62.5" height="15.3" fill="#000" fill-opacity="0.33"/>
<text x="762.9" y="482.2" fill="#f0f0f0" font-family="Liberation Mono" font-size="12" font-weight="bold">5.82434&quot;</text>
<rect x="1126.8" y="431" width="62.5" height="15.3" fill="#000" fill-opacity="0.33"/>
<text x="1130.3" y="443.2" fill="#f0f0f0" font-family="Liberation Mono" font-size="12" font-weight="bold">2.91763&quot;</text>
<rect x="1159.2" y="447.4" width="62.5" height="15.3" fill="#000" fill-opacity="0.33"/>
<text x="1162.7" y="459.59999999999997" fill="#f0f0f0" font-family="Liberation Mono" font-size="12" font-weight="bold">2.58704&quot;</text>
<rect x="1014.4" y="506.6" width="62.5" height="15.3" fill="#000" fill-opacity="0.33"/>
<text x="1017.9" y="518.8000000000001" fill="#f0f0f0" font-family="Liberation Mono" font-size="12" font-weight="bold">9.02662&quot;</text>
<rect x="1098.7" y="521.8" width="62.5" height="15.3" fill="#000" fill-opacity="0.33"/>
<text x="1102.2" y="534.0" fill="#f0f0f0" font-family="Liberation Mono" font-size="12" font-weight="bold">15.4724&quot;</text>
<rect x="1167.8" y="550" width="62.5" height="15.3" fill="#000" fill-opacity="0.33"/>
<text x="1171.3" y="562.2" fill="#f0f0f0" font-family="Liberation Mono" font-size="12" font-weight="bold">2.90921&quot;</text>
<rect x="817.8" y="595.2" width="62.5" height="15.3" fill="#000" fill-opacity="0.33"/>
<text x="821.3" y="607.4000000000001" fill="#f0f0f0" font-family="Liberation Mono" font-size="12" font-weight="bold">3.29457&quot;</text>
<rect x="881.7" y="612.5" width="62.5" height="15.3" fill="#000" fill-opacity="0.33"/>
<text x="885.2" y="624.7" fill="#f0f0f0" font-family="Liberation Mono" font-size="12" font-weight="bold">1.64256&quot;</text>
<rect x="941" y="640.6" width="62.5" height="15.3" fill="#000" fill-opacity="0.33"/>
<text x="944.5" y="652.8000000000001" fill="#f0f0f0" font-family="Liberation Mono" font-size="12" font-weight="bold">3.55893&quot;</text>
<rect x="1272.5" y="597" width="62.5" height="15.3" fill="#000" fill-opacity="0.33"/>
<text x="1276.0" y="609.2" fill="#f0f0f0" font-family="Liberation Mono" font-size="12" font-weight="bold">19.5045&quot;</text>
<rect x="1081.7" y="697.6" width="62.5" height="15.3" fill="#000" fill-opacity="0.33"/>
<text x="1085.2" y="709.8000000000001" fill="#f0f0f0" font-family="Liberation Mono" font-size="12" font-weight="bold">6.19636&quot;</text>
<path d="M897.5,408 L897.5,415 M900,408 L900,415" stroke="#111" stroke-width="1.1" fill="none"/>
<path d="M1125,512 L1126,519 M1126,515 L1136,514 M1136,510 L1137,517" stroke="#111" stroke-width="1.1" fill="none"/>
<path d="M1193,543 L1194,550 M1194,546 L1204,545 M1204,541 L1205,548" stroke="#111" stroke-width="1.1" fill="none"/>
<path d="M1152,421 L1153,428 M1153,424 L1163,423 M1163,419 L1164,426" stroke="#111" stroke-width="1.1" fill="none"/>
<path d="M1299,591 L1307,591 M1299,593.5 L1307,593.5" stroke="#222" stroke-width="1.3"/>
<path d="M1209.7,697 L1210.5,706 M1011,686 L1012,695" stroke="#111" stroke-width="1.3"/></svg></body></html>
